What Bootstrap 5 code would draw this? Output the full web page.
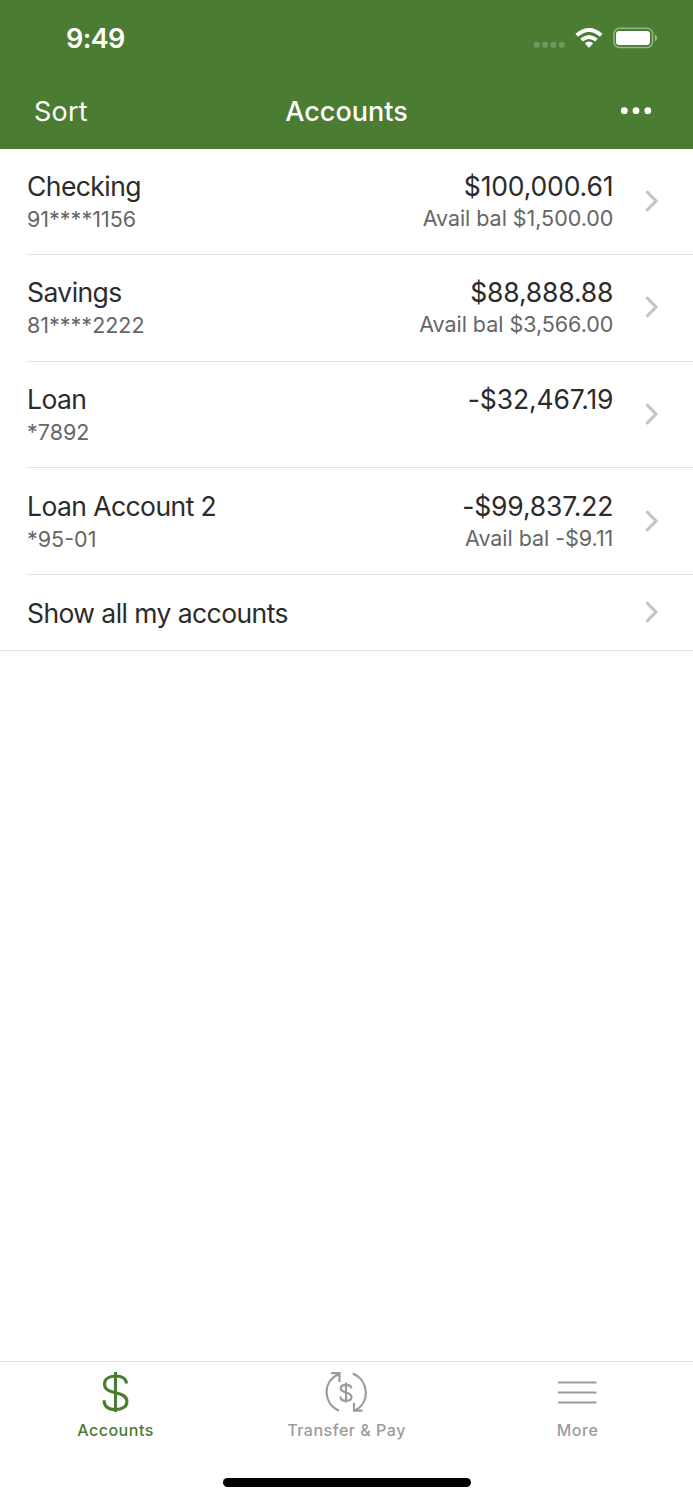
<!DOCTYPE html>
<html lang="en">
<head>
<meta charset="utf-8">
<meta name="viewport" content="width=device-width, initial-scale=1">
<title>Accounts</title>
<link href="https://cdn.jsdelivr.net/npm/bootstrap@5.3.0/dist/css/bootstrap.min.css" rel="stylesheet">
<style>
  body { font-family: Inter, "Liberation Sans", sans-serif; color: #2b2b2b; background: #fff; }
  svg { display: block; }
  .app-header { background: #4a7c32; height: 149px; }
  .status-bar { height: 75px; padding: 0 36px 0 66px; }
  .clock { font-size: 27px; font-weight: 600; letter-spacing: -.6px; line-height: 32px; padding-top: 2px; }
  .title-bar { height: 74px; padding: 0 34px; }
  .title-bar > * { flex: 1 1 0; font-size: 27px; line-height: 32px; }
  .title-bar svg { margin: 0 7px 3px 0; }
  .sort-action { letter-spacing: .2px; }
  .page-title { font-weight: 500; }
  .account-list { --bs-list-group-bg: transparent; --bs-list-group-color: #2b2b2b; border-bottom: 1px solid #e3e3e3; }
  .account-list .list-group-item { height: 106.6px; margin-left: 27px; padding: 20.4px 34px 0 0; border-color: #e3e3e3; }
  .account-list .list-group-item:first-child { height: 106px; padding-top: 20px; }
  .account-list .list-group-item:last-child { height: 75.6px; padding-top: 21px; }
  .primary-line { font-size: 26.5px; line-height: 34px; letter-spacing: -.57px; }
  .values .primary-line { letter-spacing: -.15px; }
  .secondary-line { font-size: 21.5px; line-height: 32px; color: #666; }
  .values { margin-right: 31.7px; }
  .values .secondary-line { letter-spacing: -.04px; line-height: 31.4px; }
  .chevron { margin-top: 21px; }
  .list-group-item:last-child .chevron { margin-top: 5px; }
  .tab-bar { height: 139px; border-top: 1px solid #e3e3e3; padding-top: 6px; }
  .tab-bar .nav-link { padding: 0; color: #9b9b9b; font-size: 16px; font-weight: 500; line-height: 20px; letter-spacing: .52px; }
  .tab-bar .nav-link.active { color: #4a7c32; }
  .tab-bar svg { margin: 0 auto 8px; }
  .home-indicator { width: 248px; height: 9px; margin-bottom: 13px; background: #000; }
</style>
</head>
<body>
<div class="d-flex flex-column vh-100">
  <header class="app-header text-white">
    <div class="status-bar d-flex align-items-center justify-content-between">
      <div class="clock">9:49</div>
      <svg width="124" height="26" viewBox="0 0 124 26" fill="#fff" aria-hidden="true">
        <g opacity=".22"><rect x="1" y="17" width="5.6" height="5.8" rx="1.7"/><rect x="9.3" y="17" width="5.6" height="5.8" rx="1.7"/><rect x="17.6" y="17" width="5.6" height="5.8" rx="1.7"/><rect x="26" y="17" width="5.6" height="5.8" rx="1.7"/></g>
        <g fill="none" stroke="#fff" stroke-width="3.9"><path d="M43.7 10.2Q56 -.2 68.3 10.2"/><path d="M48.5 15.1Q56 8.8 63.5 15.1"/></g>
        <path d="M51.8 18.2Q56 14.9 60.2 18.2L56.6 22.2Q56 22.8 55.4 22.2Z"/>
        <rect x="81" y="3.3" width="38.6" height="19.2" rx="5.5" fill="none" stroke="#fff" stroke-width="1.5" opacity=".43"/>
        <rect x="83" y="6" width="34" height="14" rx="3.2"/>
        <path d="M122 9.6Q124 10.5 124 12.9T122 16.2Z" opacity=".5"/>
      </svg>
    </div>
    <div class="title-bar d-flex align-items-center">
      <div class="sort-action">Sort</div>
      <div class="page-title text-center text-nowrap">Accounts</div>
      <div class="d-flex justify-content-end">
        <svg width="32" height="8" viewBox="0 0 32 8" fill="#fff" aria-label="More options"><circle cx="4.3" cy="3.7" r="3.4"/><circle cx="16" cy="3.7" r="3.4"/><circle cx="27.8" cy="3.7" r="3.4"/></svg>
      </div>
    </div>
  </header>

  <main class="flex-grow-1">
    <div class="account-list list-group list-group-flush">
      <div class="list-group-item d-flex">
        <div class="flex-grow-1"><div class="primary-line">Checking</div><div class="secondary-line">91****1156</div></div>
        <div class="values text-end"><div class="primary-line">$100,000.61</div><div class="secondary-line">Avail bal $1,500.00</div></div>
        <svg class="chevron" width="14" height="22" viewBox="0 0 14 22" fill="none" stroke="#c5c5c7" stroke-width="3.1" stroke-linecap="round"><path d="M2.3 2.2L11 11L2.3 19.8"/></svg>
      </div>
      <div class="list-group-item d-flex">
        <div class="flex-grow-1"><div class="primary-line">Savings</div><div class="secondary-line">81****2222</div></div>
        <div class="values text-end"><div class="primary-line">$88,888.88</div><div class="secondary-line">Avail bal $3,566.00</div></div>
        <svg class="chevron" width="14" height="22" viewBox="0 0 14 22" fill="none" stroke="#c5c5c7" stroke-width="3.1" stroke-linecap="round"><path d="M2.3 2.2L11 11L2.3 19.8"/></svg>
      </div>
      <div class="list-group-item d-flex">
        <div class="flex-grow-1"><div class="primary-line">Loan</div><div class="secondary-line">*7892</div></div>
        <div class="values text-end"><div class="primary-line">-$32,467.19</div></div>
        <svg class="chevron" width="14" height="22" viewBox="0 0 14 22" fill="none" stroke="#c5c5c7" stroke-width="3.1" stroke-linecap="round"><path d="M2.3 2.2L11 11L2.3 19.8"/></svg>
      </div>
      <div class="list-group-item d-flex">
        <div class="flex-grow-1"><div class="primary-line">Loan Account 2</div><div class="secondary-line">*95-01</div></div>
        <div class="values text-end"><div class="primary-line">-$99,837.22</div><div class="secondary-line">Avail bal -$9.11</div></div>
        <svg class="chevron" width="14" height="22" viewBox="0 0 14 22" fill="none" stroke="#c5c5c7" stroke-width="3.1" stroke-linecap="round"><path d="M2.3 2.2L11 11L2.3 19.8"/></svg>
      </div>
      <div class="list-group-item d-flex">
        <div class="flex-grow-1"><div class="primary-line">Show all my accounts</div></div>
        <svg class="chevron" width="14" height="22" viewBox="0 0 14 22" fill="none" stroke="#c5c5c7" stroke-width="3.1" stroke-linecap="round"><path d="M2.3 2.2L11 11L2.3 19.8"/></svg>
      </div>
    </div>
  </main>

  <footer class="tab-bar d-flex flex-column justify-content-between">
    <nav class="nav nav-fill nav-justified">
      <a class="nav-link active" href="#">
        <svg width="44" height="44" viewBox=".5 -1.2 44 44" fill="none" stroke="currentColor" stroke-width="3.1"><path d="M22 2.8V44M32.9 14.4C32.9 9.5 28.5 6.8 22 6.8C15.2 6.8 11 10 11 14.9C11 20.2 15 21.9 22 23.5C29.5 25.2 33.4 27.3 33.4 32.3C33.4 37.7 28.5 40.3 22 40.3C15 40.3 10.6 37.5 10.6 31"/></svg>
        Accounts
      </a>
      <a class="nav-link" href="#">
        <svg width="44" height="44" viewBox="1 -1.2 44 44" fill="none" stroke="currentColor" stroke-width="2.2"><path d="M15 41.5C-1.5 34 -1.5 12 14.6 5M7 4H15.5V12.7M28.8 4.3C46 12 46 34 30.5 41.5M30 33.5V41.5H38.5"/><path d="M22 13.2V33.4M27.3 19.3C27.3 16.8 25 15.6 22 15.6C18.8 15.6 16.7 17 16.7 19.4C16.7 21.9 19 22.5 22 23.3C25.5 24.2 27.5 25.2 27.5 27.8C27.5 30.4 25 31.6 22 31.6C18.7 31.6 16.5 30.2 16.5 27.2"/></svg>
        Transfer &amp; Pay
      </a>
      <a class="nav-link" href="#">
        <svg width="44" height="44" viewBox="1 0 44 44" fill="none" stroke="currentColor" stroke-width="2"><path d="M3 14.5H41.5M3 24.5H41.5M3 34.5H41.5"/></svg>
        More
      </a>
    </nav>
    <div class="home-indicator rounded-pill mx-auto"></div>
  </footer>
</div>
<script src="https://cdn.jsdelivr.net/npm/bootstrap@5.3.0/dist/js/bootstrap.bundle.min.js"></script>
</body>
</html>
